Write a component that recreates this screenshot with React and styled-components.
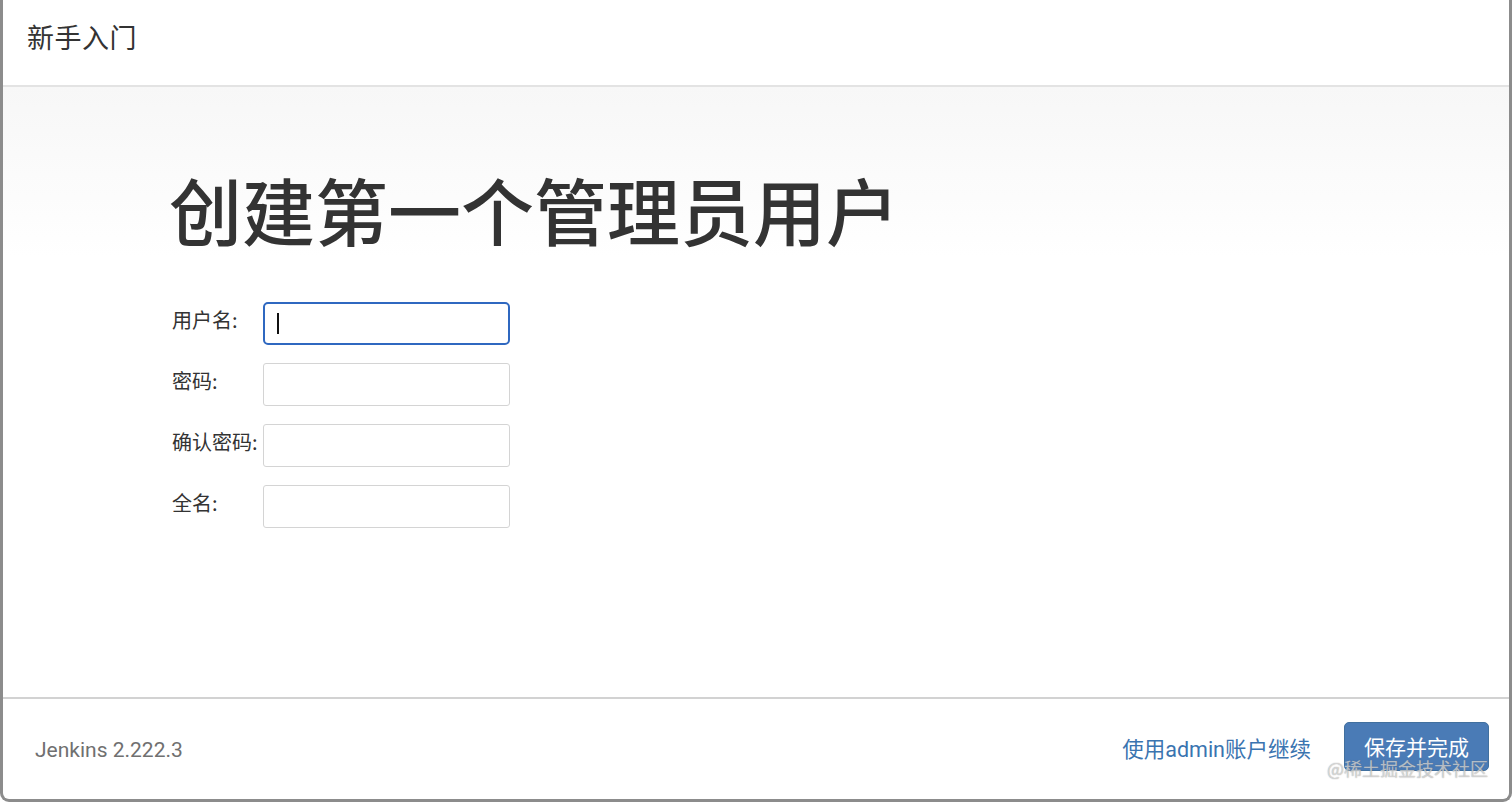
import React from "react";
import styled, { createGlobalStyle } from "styled-components";

const Global = createGlobalStyle`
  html, body { margin: 0; padding: 0; background: #ffffff; }
  body { font-family: Roboto, "Noto Sans CJK SC", sans-serif; color: #333; }
  * { box-sizing: border-box; }
`;

const Frame = styled.div`
  position: relative;
  width: 1512px;
  height: 802px;
  display: flex;
  flex-direction: column;
  border: 3px solid #8c8c8c;
  border-top: none;
  border-radius: 0 0 9px 9px;
  overflow: hidden;
  background: #fff;
`;

const Header = styled.header`
  height: 87px;
  flex: none;
  display: flex;
  align-items: center;
  padding: 0 0 12px 24px;
  border-bottom: 2px solid #e3e3e3;
`;

const HeaderTitle = styled.h1`
  margin: 0;
  font-family: "Noto Sans CJK SC", sans-serif;
  font-size: 27px;
  font-weight: 400;
  color: #333;
  letter-spacing: 0.5px;
`;

const Body = styled.main`
  flex: 1;
  padding: 85px 0 0 164px;
  background: linear-gradient(#f7f7f7 0px, #fcfcfc 110px, #ffffff 170px);
`;

const Title = styled.h2`
  margin: 0 0 58px 2px;
  font-family: "Noto Sans CJK SC", sans-serif;
  font-size: 73px;
  line-height: 72px;
  font-weight: 500;
  color: #333;
`;

const Form = styled.form`
  display: grid;
  grid-template-columns: 96px 247px;
  row-gap: 18px;
  align-items: start;
`;

const Label = styled.label`
  font-family: "Noto Sans CJK SC", sans-serif;
  font-size: 20px;
  line-height: 26px;
  color: #333;
  padding: 5px 0 0 5px;
  white-space: nowrap;
`;

const Input = styled.div`
  position: relative;
  height: 43px;
  border: ${(p) => (p.$focused ? "2px solid #2f68c0" : "1px solid #d4d4d4")};
  border-radius: ${(p) => (p.$focused ? "5px" : "3px")};
  background: #fff;
`;

const Caret = styled.span`
  position: absolute;
  left: 12px;
  top: 9px;
  width: 2px;
  height: 21px;
  background: #111;
`;

const Footer = styled.footer`
  height: 102px;
  flex: none;
  display: flex;
  align-items: center;
  padding: 0 20px 0 32px;
  border-top: 2px solid #d2d2d2;
`;

const Version = styled.span`
  font-family: Roboto, sans-serif;
  font-size: 21px;
  color: #707070;
  margin-top: 2px;
`;

const Spacer = styled.div`
  flex: 1;
`;

const LinkButton = styled.a`
  font-family: Roboto, "Noto Sans CJK SC", sans-serif;
  font-size: 21.5px;
  color: #3a74b0;
  text-decoration: none;
  margin-right: 33px;
  margin-bottom: 4px;
`;

const PrimaryButton = styled.button`
  height: 49px;
  padding: 0 19px;
  margin-bottom: 6px;
  background: #4a7bb6;
  border: 1px solid #41709f;
  border-radius: 5px;
  color: #fff;
  font-family: "Noto Sans CJK SC", sans-serif;
  font-size: 21px;
`;

const Watermark = styled.div`
  position: absolute;
  right: 21px;
  bottom: 20px;
  font-family: "Noto Sans CJK SC", sans-serif;
  font-size: 18px;
  line-height: 22px;
  color: rgba(255, 255, 255, 0.55);
  text-shadow: 0 0 1px rgba(110, 110, 110, 0.8);
  pointer-events: none;
`;

const fields = [
  { label: "用户名:", focused: true },
  { label: "密码:" },
  { label: "确认密码:" },
  { label: "全名:" },
];

export default function App() {
  return (
    <>
      <Global />
      <Frame>
        <Header>
          <HeaderTitle>新手入门</HeaderTitle>
        </Header>
        <Body>
          <Title>创建第一个管理员用户</Title>
          <Form>
            {fields.map((f) => (
              <React.Fragment key={f.label}>
                <Label>{f.label}</Label>
                <Input $focused={f.focused}>{f.focused && <Caret />}</Input>
              </React.Fragment>
            ))}
          </Form>
        </Body>
        <Footer>
          <Version>Jenkins 2.222.3</Version>
          <Spacer />
          <LinkButton href="#">使用admin账户继续</LinkButton>
          <PrimaryButton type="button">保存并完成</PrimaryButton>
        </Footer>
        <Watermark>@稀土掘金技术社区</Watermark>
      </Frame>
    </>
  );
}
